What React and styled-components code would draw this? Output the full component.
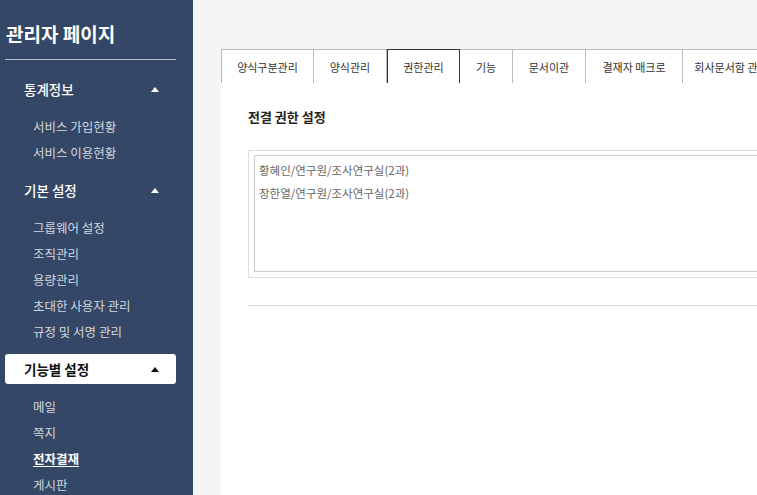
import styled, { createGlobalStyle } from "styled-components";

const GlobalStyle = createGlobalStyle`
  html, body {
    margin: 0;
    padding: 0;
    height: 100%;
    overflow: hidden;
  }
  body {
    font-family: "Noto Sans CJK KR", "Noto Sans", sans-serif;
    background: #f5f5f5;
  }
  * {
    box-sizing: border-box;
  }
`;

const Layout = styled.div`
  display: flex;
  height: 100vh;
  width: 100vw;
  overflow: hidden;
`;

const Sidebar = styled.aside`
  flex: 0 0 193px;
  background: #344767;
  color: #fff;
  padding: 0 17px 0 5px;
`;

const Title = styled.h1`
  margin: 21px 0 0;
  padding: 0 0 13px 1px;
  font-size: 19px;
  line-height: 25px;
  font-weight: 700;
  border-bottom: 1px solid #b4bac6;
`;

const Menu = styled.nav`
  padding-top: 14px;
`;

const SectionHeader = styled.div`
  display: flex;
  align-items: center;
  justify-content: space-between;
  height: 30px;
  padding: 0 17px 0 19px;
  border-radius: 3px;
  font-size: 13.5px;
  font-weight: ${(p) => (p.$active ? 700 : 500)};
  background: ${(p) => (p.$active ? "#fff" : "transparent")};
  color: ${(p) => (p.$active ? "#111" : "#fff")};
`;

const Caret = styled.span`
  width: 0;
  height: 0;
  border-left: 4px solid transparent;
  border-right: 4px solid transparent;
  border-bottom: 5px solid ${(p) => (p.$dark ? "#111" : "#fff")};
`;

const SubList = styled.ul`
  list-style: none;
  margin: 0;
  padding: 10px 0 9px 28px;
`;

const SubItem = styled.li`
  height: 26px;
  line-height: 26px;
  font-size: 12.5px;
  color: ${(p) => (p.$current ? "#fff" : "#d3d7de")};
  font-weight: ${(p) => (p.$current ? 700 : 400)};
  text-decoration: ${(p) => (p.$current ? "underline" : "none")};
  text-underline-offset: 2px;
`;

const Main = styled.main`
  flex: 1;
  overflow: hidden;
  padding: 49px 0 0 28px;
`;

const Board = styled.div`
  width: 640px;
  height: 100%;
  display: flex;
  flex-direction: column;
`;

const Tabs = styled.div`
  display: flex;
  height: 34px;
  border-bottom: 1px solid #333;
`;

const Tab = styled.div`
  flex: 0 0 ${(p) => p.$w}px;
  display: flex;
  align-items: center;
  justify-content: center;
  font-size: 11px;
  color: #333;
  background: #fff;
  border: 1px solid ${(p) => (p.$active ? "#333" : "#bbb")};
  border-left-width: ${(p) => (p.$first || p.$active ? 1 : 0)}px;
  border-bottom: none;
  margin-bottom: ${(p) => (p.$active ? -1 : 0)}px;
  height: ${(p) => (p.$active ? 35 : 34)}px;
  white-space: nowrap;
  ${(p) => (p.$afterActive ? "border-left-width: 0;" : "")}
`;

const Panel = styled.section`
  flex: 1;
  background: #fff;
  padding: 25px 0 0 27px;
`;

const Heading = styled.h2`
  margin: 0;
  font-size: 13px;
  line-height: 18px;
  font-weight: 700;
  color: #222;
`;

const OuterBox = styled.div`
  margin-top: 24px;
  border: 1px solid #ddd;
  padding: 4px 5px 5px;
`;

const InnerBox = styled.div`
  height: 117px;
  border: 1px solid #ccc;
  padding: 3px 4px;
`;

const Line = styled.div`
  font-size: 11.5px;
  line-height: 23px;
  color: #666;
`;

const Divider = styled.hr`
  margin: 27px 0 0;
  border: none;
  border-top: 1px solid #ddd;
`;

const sections = [
  { title: "통계정보", items: ["서비스 가입현황", "서비스 이용현황"] },
  {
    title: "기본 설정",
    items: ["그룹웨어 설정", "조직관리", "용량관리", "초대한 사용자 관리", "규정 및 서명 관리"],
  },
  { title: "기능별 설정", active: true, items: ["메일", "쪽지", "전자결재", "게시판"], current: "전자결재" },
];

const tabs = [
  { label: "양식구분관리", w: 93 },
  { label: "양식관리", w: 73 },
  { label: "권한관리", w: 73, active: true },
  { label: "기능", w: 53 },
  { label: "문서이관", w: 73 },
  { label: "결재자 매크로", w: 97 },
  { label: "회사문서함 관리", w: 97 },
];

export default function App() {
  return (
    <Layout>
      <GlobalStyle />
      <Sidebar>
        <Title>관리자 페이지</Title>
        <Menu>
          {sections.map((s) => (
            <div key={s.title}>
              <SectionHeader $active={s.active}>
                <span>{s.title}</span>
                <Caret $dark={s.active} />
              </SectionHeader>
              <SubList>
                {s.items.map((it) => (
                  <SubItem key={it} $current={it === s.current}>
                    {it}
                  </SubItem>
                ))}
              </SubList>
            </div>
          ))}
        </Menu>
      </Sidebar>
      <Main>
        <Board>
          <Tabs>
            {tabs.map((t, i) => (
              <Tab
                key={t.label}
                $w={t.w}
                $first={i === 0}
                $active={t.active}
                $afterActive={i > 0 && tabs[i - 1].active}
              >
                {t.label}
              </Tab>
            ))}
          </Tabs>
          <Panel>
            <Heading>전결 권한 설정</Heading>
            <OuterBox>
              <InnerBox>
                <Line>황혜인/연구원/조사연구실(2과)</Line>
                <Line>장한열/연구원/조사연구실(2과)</Line>
              </InnerBox>
            </OuterBox>
            <Divider />
          </Panel>
        </Board>
      </Main>
    </Layout>
  );
}
